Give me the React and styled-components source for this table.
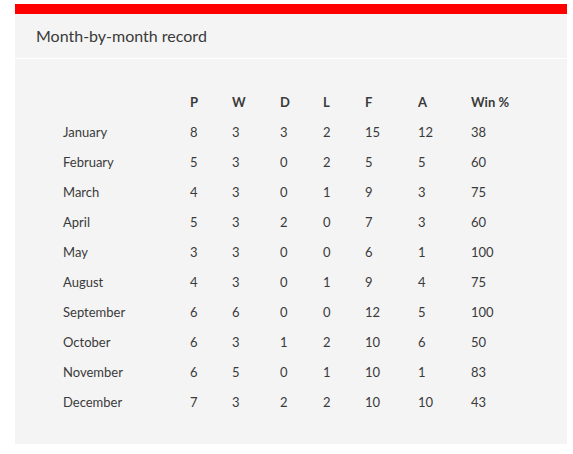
import React from "react";
import styled, { createGlobalStyle } from "styled-components";

const rows = [
  ["January", 8, 3, 3, 2, 15, 12, 38],
  ["February", 5, 3, 0, 2, 5, 5, 60],
  ["March", 4, 3, 0, 1, 9, 3, 75],
  ["April", 5, 3, 2, 0, 7, 3, 60],
  ["May", 3, 3, 0, 0, 6, 1, 100],
  ["August", 4, 3, 0, 1, 9, 4, 75],
  ["September", 6, 6, 0, 0, 12, 5, 100],
  ["October", 6, 3, 1, 2, 10, 6, 50],
  ["November", 6, 5, 0, 1, 10, 1, 83],
  ["December", 7, 3, 2, 2, 10, 10, 43],
];

const headings = ["", "P", "W", "D", "L", "F", "A", "Win %"];

function App() {
  return (
    <>
      <GlobalStyle />
      <Panel>
        <Header>
          <Title>Month-by-month record</Title>
        </Header>
        <Body>
          <Row>
            {headings.map((h, i) => (
              <HeadCell key={i}>{h}</HeadCell>
            ))}
          </Row>
          {rows.map(row => (
            <Row key={row[0]}>
              {row.map((v, i) => (
                <Cell key={i}>{v}</Cell>
              ))}
            </Row>
          ))}
        </Body>
      </Panel>
    </>
  );
}

export default App;

const GlobalStyle = createGlobalStyle`
  body {
    margin: 0;
    background: #ffffff;
    font-family: Lato, "Liberation Sans", sans-serif;
  }
`;

const Panel = styled.div`
  margin: 4px 6px 0 15px;
  width: 552px;
  background: #f4f4f4;
  border-top: 10px solid #ff0000;
`;

const Header = styled.div`
  height: 45px;
  box-sizing: border-box;
  padding: 0 0 2px 21px;
  display: flex;
  align-items: center;
  border-bottom: 1px solid #ffffff;
`;

const Title = styled.h2`
  margin: 0;
  font-size: 16px;
  font-weight: 400;
  color: #3a3a3a;
`;

const Body = styled.div`
  padding: 28px 0 27px 48px;
`;

const Row = styled.div`
  display: grid;
  grid-template-columns: 127px 42px 48px 43px 42px 53px 53px auto;
  height: 30px;
  align-items: center;
`;

const Cell = styled.div`
  font-size: 13px;
  color: #3a3a3a;
`;

const HeadCell = styled(Cell)`
  font-weight: 700;
`;
